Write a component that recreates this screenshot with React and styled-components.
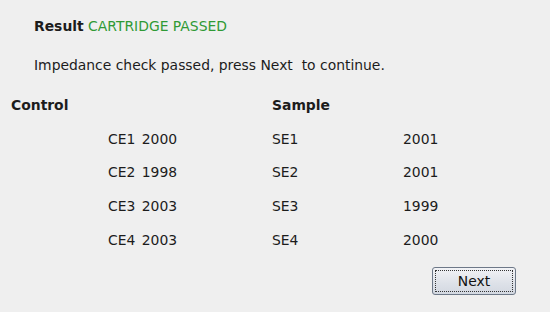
import React from "react";
import styled, { createGlobalStyle } from "styled-components";

const Global = createGlobalStyle`
  html, body { margin: 0; padding: 0; background: #efefef; }
  body { font-family: "DejaVu Sans", "Liberation Sans", sans-serif; font-size: 13.9px; color: #1c1c1c; }
  #root { width: 550px; height: 312px; overflow: hidden; }
`;

const Page = styled.div`
  display: flex;
  flex-direction: column;
  padding-top: 19px;
  line-height: 15px;
`;

const Line = styled.div`
  padding-left: 34px;
  white-space: pre;
  margin-bottom: ${(p) => p.$gap || 0}px;
`;

const Label = styled.span`
  font-weight: bold;
`;

const Status = styled.span`
  color: #2f9a35;
`;

const Table = styled.div`
  display: grid;
  grid-template-columns: 97px 164px 131px 1fr;
  grid-auto-rows: 33.75px;
  align-items: center;
  margin-top: 15.4px;
  padding-left: 11px;
`;

const Head = styled.div`
  font-weight: bold;
  grid-column: ${(p) => p.$col};
`;

const Cell = styled.div`
  grid-column: ${(p) => p.$col};
  white-space: pre;
  word-spacing: ${(p) => p.$ws || 0}px;
`;

const Footer = styled.div`
  display: flex;
  justify-content: flex-end;
  padding-right: 34px;
  margin-top: 10px;
`;

const Button = styled.button`
  position: relative;
  width: 84px;
  height: 28px;
  border: 1px solid #6d7888;
  border-radius: 3px;
  background: linear-gradient(#f2f3f6, #dde1e8 60%, #d3d8e1);
  font-family: inherit;
  font-size: 13.9px;
  color: #111;
  padding: 0;
  cursor: pointer;
  &::after {
    content: "";
    position: absolute;
    inset: 2px;
    border: 1px dotted #333;
  }
`;

const rows = [
  ["CE1 2000", "SE1", "2001"],
  ["CE2 1998", "SE2", "2001"],
  ["CE3 2003", "SE3", "1999"],
  ["CE4 2003", "SE4", "2000"],
];

export default function App() {
  return (
    <>
      <Global />
      <Page>
        <Line $gap={24}>
          <Label>Result</Label> <Status>CARTRIDGE PASSED</Status>
        </Line>
        <Line>{"Impedance check passed, press Next  to continue."}</Line>
        <Table>
          <Head $col="1 / span 2">Control</Head>
          <Head $col="3">Sample</Head>
          {rows.map(([c, s, v]) => (
            <React.Fragment key={s}>
              <Cell $col="2" $ws={2}>{c}</Cell>
              <Cell $col="3">{s}</Cell>
              <Cell $col="4">{v}</Cell>
            </React.Fragment>
          ))}
        </Table>
        <Footer>
          <Button>Next</Button>
        </Footer>
      </Page>
    </>
  );
}
